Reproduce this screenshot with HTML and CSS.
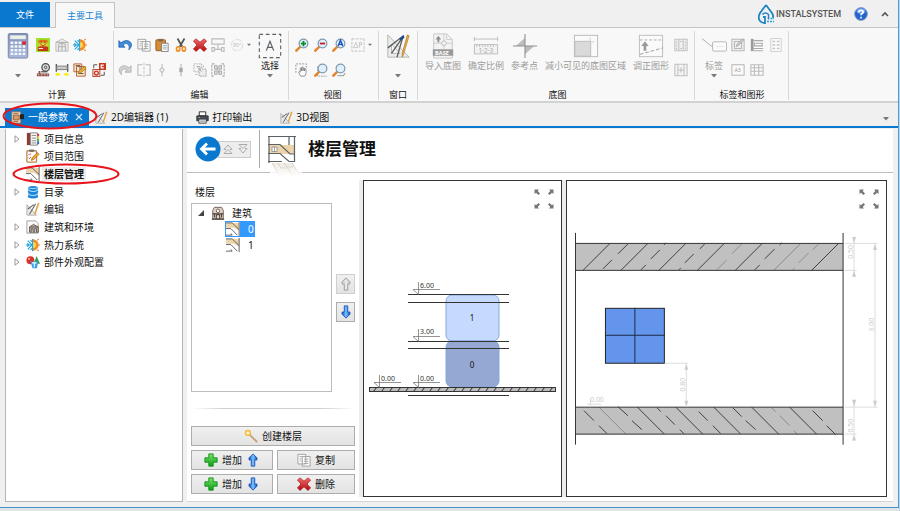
FILE: index.html
```html
<!DOCTYPE html>
<html lang="zh-CN">
<head>
<meta charset="utf-8">
<meta name="viewport" content="width=device-width, initial-scale=1">
<title>楼层管理</title>
<link rel="stylesheet" href="styles.css">
</head>
<body>
<svg class="sprite" aria-hidden="true">
  <defs>
    <linearGradient id="g-blue" x1="0" x2="1"><stop offset="0" stop-color="#0b4fc0"/><stop offset=".5" stop-color="#7cc4ff"/><stop offset="1" stop-color="#0b4fc0"/></linearGradient>
    <linearGradient id="g-green" x1="0" y1="0" x2="0" y2="1"><stop offset="0" stop-color="#7be36a"/><stop offset="1" stop-color="#0b9f12"/></linearGradient>
    <linearGradient id="g-red" x1="0" y1="0" x2="0" y2="1"><stop offset="0" stop-color="#f56a6a"/><stop offset="1" stop-color="#b30d12"/></linearGradient>
    <linearGradient id="g-calc" x1="0" y1="0" x2="0" y2="1"><stop offset="0" stop-color="#7f90bb"/><stop offset="1" stop-color="#a9b8dc"/></linearGradient>
    <linearGradient id="g-fade" x1="0" y1="0" x2="0" y2="1"><stop offset="0" stop-color="#fff" stop-opacity=".45"/><stop offset="1" stop-color="#fff"/></linearGradient>
  </defs>
  <symbol id="i-calc" viewBox="0 0 24 28">
    <rect x="1.500" y=".5" width="21" height="26.500" rx="1.500" fill="url(#g-calc)" stroke="#7683a6"/>
    <rect x="3.500" y="2.500" width="17" height="4" fill="#eef3ea" stroke="#c4ccd8" stroke-width=".5"/>
    <path d="M4 10.500h16M4 14.500h16M4 18.500h16M4 22.500h16" stroke="#f4f6fb" stroke-width="2.600" stroke-dasharray="3 1.300"/>
    <rect x="16.500" y="9" width="4" height="3.500" fill="#d8232a"/>
  </symbol>
  <symbol id="i-house" viewBox="0 0 16 16">
    <rect width="16" height="16" fill="#9be62b"/><path d="M2 4 4 2h8l2 2v1H2z" fill="#e3741b"/><path d="M3 6h10v4H3z" fill="#ead04a"/><path d="M4 6l4 3 4-3M4 9.500h8M6 3v3m4-3v3" fill="none" stroke="#c14a1d"/><path d="M2 10h12v5H2z" fill="#c53a16"/><path d="M3 12h5" stroke="#fff"/>
  </symbol>
  <symbol id="i-building-gray" viewBox="0 0 16 16">
    <path d="M1 5 8 1l7 4v10H1z" fill="#ececec" stroke="#b9b9b9"/><path d="M4 15V9q0-3 4-3t4 3v6M8 6v9M4 10h8M1 5h14" fill="none" stroke="#b5b5b5" stroke-width="1.300"/>
  </symbol>
  <symbol id="i-sun" viewBox="0 0 16 16">
    <path d="M8 1.500a6.500 6.500 0 0 1 0 13z" fill="#f68b1e"/><path d="M8 4.500a3.500 3.500 0 0 1 0 7z" fill="#ffd45a"/><path d="M13 2.500l1.500-1M14.500 8H16M13 13.500l1.500 1" stroke="#ef6a1b" stroke-width="1.300"/><path d="M0 8h7.500M7.500 1v14M2 3l5 5-5 5M1.500 6l2 2-2 2M5 2.500l2.500 2M5 13.500l2.500-2" fill="none" stroke="#29a5dc" stroke-width="1.300"/>
  </symbol>
  <symbol id="i-gauge" viewBox="0 0 16 16">
    <circle cx="11" cy="5" r="4.300" fill="#ddd" stroke="#4b4b4b" stroke-width="1.400"/><circle cx="11" cy="5" r="1.500" fill="none" stroke="#444"/><path d="M3 9h2v3H3zM1 12h14v3H1z" fill="#8e4a43"/><path d="M2 13.500h12" stroke="#ddd" stroke-dasharray="2 1.500"/><path d="M6 10h7" stroke="#555" stroke-width="1.500"/>
  </symbol>
  <symbol id="i-pipe" viewBox="0 0 16 16">
    <path d="M1.500 1v9M14.500 1v9" stroke="#555" stroke-width="1.500"/><path d="M2 3.500h12v4H2z" fill="#ccc" stroke="#777"/><path d="M0 13l3-2.500V12h3v2H3v1.500zM16 13l-3-2.500V12h-3v2h3v1.500z" fill="#f5ee00"/>
  </symbol>
  <symbol id="i-sheets" viewBox="0 0 16 16">
    <path d="M1 1h9v9H1zM4 4h10v11H4z" fill="#f7e7c9" stroke="#b5532e"/><path d="M3 3h5v4M6 12h6M7 8h5" fill="none" stroke="#5b4a44"/><path d="M6 12l1-3 6-5 2 2-6 5z" fill="#f0b42e" stroke="#7a5a20" stroke-width=".6"/>
  </symbol>
  <symbol id="i-cg" viewBox="0 0 16 16">
    <rect x="8" y="0" width="8" height="8" fill="#c5391d"/><path d="M13.500 2.500h-3v3h3" fill="none" stroke="#fff" stroke-width="1.300"/><rect x="1" y="7.500" width="8" height="8" fill="#f4ece9" stroke="#b23a22"/><circle cx="5" cy="11.500" r="2.200" fill="none" stroke="#c5391d" stroke-width="1.500"/><path d="M2 6V2h4M14 10v4h-4" fill="none" stroke="#444"/>
  </symbol>
  <symbol id="i-undo" viewBox="0 0 16 16">
    <path d="M1 3v7.500h7L5.500 8Q9 4.500 12 7.500q1.500 2 .5 6Q17 9 14.500 5 10 .5 3.500 5.500z" fill="#3c8ee0" stroke="#164f9e" stroke-width=".8"/>
  </symbol>
  <symbol id="i-redo" viewBox="0 0 16 16">
    <path d="M15 3v7.500H8L10.500 8Q7 5.500 4.500 8q-1.500 2-.5 5.500Q-.5 9 2.500 5 7 1 12.500 5.500z" fill="#d2d2d2" stroke="#a5a5a5" stroke-width=".8"/>
  </symbol>
  <symbol id="i-copy" viewBox="0 0 16 16">
    <path d="M1 1.500h9v11H1zM6 4h9v11H6z" fill="#fafafa" stroke="#9a9a9a"/><path d="M8 7h5M8 9.500h5M8 12h5M3 4h3M3 6.500h2M3 9h2" stroke="#a6a6a6"/>
  </symbol>
  <symbol id="i-paste" viewBox="0 0 16 16">
    <rect x="1" y="2" width="11" height="12.500" rx="1" fill="#d88a35" stroke="#8e571e"/><rect x="4" y="1" width="5" height="3" fill="#7b6a55"/><path d="M7.500 6h7.500v9.500H7.500z" fill="#fff" stroke="#777"/><path d="M9 8.500h4.500M9 10.500h4.500M9 12.500h4.500" stroke="#8aa"/>
  </symbol>
  <symbol id="i-cut" viewBox="0 0 16 16">
    <path d="M4 .5 9.500 10M12 .5 6.500 10" stroke="#555" stroke-width="2"/><ellipse cx="4.700" cy="12.500" rx="1.900" ry="2.500" fill="none" stroke="#f08a1c" stroke-width="1.800"/><ellipse cx="11.300" cy="12.500" rx="1.900" ry="2.500" fill="none" stroke="#f08a1c" stroke-width="1.800"/>
  </symbol>
  <symbol id="i-delete" viewBox="0 0 16 16">
    <path d="M3.500 1 8 4.800 12.500 1 15.500 3.500 11.500 8l4 4.500-3 2.800L8 11.200l-4.500 4.100-3-2.800L4.500 8 .5 3.500z" fill="url(#g-red)" stroke="#a3161a" stroke-width=".8" stroke-linejoin="round"/>
  </symbol>
  <symbol id="i-align" viewBox="0 0 16 16">
    <path d="M1 1h14v6H1zM1 11h3v4H1zM4 13h8M12 11h3v4h-3zM8 7v6" fill="none" stroke="#bbb" stroke-width="1.300"/>
  </symbol>
  <symbol id="i-mirror" viewBox="0 0 16 16">
    <path d="M6 2H1v12h5M10 2h5v12h-5" fill="none" stroke="#b8b8b8" stroke-width="1.200"/><path d="M8 0v16" stroke="#b8b8b8" stroke-dasharray="3 1.500"/>
  </symbol>
  <symbol id="i-node" viewBox="0 0 16 16"><path d="M8 1v4M8 11v4M8 5l2.500 3L8 11 5.500 8z" fill="none" stroke="#b9b9b9" stroke-width="1.200"/></symbol>
  <symbol id="i-node2" viewBox="0 0 16 16"><path d="M8 1v14" stroke="#b0b0b0" stroke-width="1.200"/><path d="M6 5.500h4v5H6z" fill="#aaa"/></symbol>
  <symbol id="i-group" viewBox="0 0 16 16">
    <path d="M1 1h9v9H1z" fill="none" stroke="#aaa" stroke-dasharray="2 1"/><path d="M7 7h8v8H7z" fill="#eee" stroke="#999" stroke-dasharray="2 1"/><path d="M3 13h2M12 3v2M5 5l5 5M4 4h4v3" fill="none" stroke="#a5a5a5"/>
  </symbol>
  <symbol id="i-ungroup" viewBox="0 0 16 16">
    <path d="M4 1H1v14h3M12 1h3v14h-3" fill="none" stroke="#aaa" stroke-width="1.200" stroke-dasharray="3 1"/><path d="M4 3h3v4H4zM9 3h3v4H9zM4 9h3v4H4zM9 9h3v4H9zM7 5l2 6" fill="#ddd" stroke="#a5a5a5"/>
  </symbol>
  <symbol id="i-select" viewBox="0 0 26 28">
    <rect x="1.500" y="1.500" width="23" height="25" fill="none" stroke="#5a6064" stroke-width="1.200" stroke-dasharray="4 3"/><path d="M9 19 13 9l4 10M10.500 15.500h5" fill="none" stroke="#5a6064" stroke-width="1.300"/>
  </symbol>
  <symbol id="lens" viewBox="0 0 16 16">
    <path d="M1.500 14.500 6 10" stroke="#e58127" stroke-width="2.800" stroke-linecap="round"/><circle cx="9.700" cy="6.300" r="5" fill="#dff0fc" stroke="#7e9ab0" stroke-width="1.400"/>
  </symbol>
  <symbol id="i-zoomin" viewBox="0 0 16 16"><use href="#lens"/><path d="M9.700 3.300v6M6.700 6.300h6" stroke="#0c8a1c" stroke-width="2"/></symbol>
  <symbol id="i-zoomout" viewBox="0 0 16 16"><use href="#lens"/><path d="M6.700 6.300h6" stroke="#c81922" stroke-width="2"/></symbol>
  <symbol id="i-zoomall" viewBox="0 0 16 16"><use href="#lens"/><path d="M7 9.500 9.700 2.500l2.700 7M8 7.300h3.500" fill="none" stroke="#1d4fc4" stroke-width="1.600"/></symbol>
  <symbol id="i-zoomsel" viewBox="0 0 16 16"><path d="M4 4v11h11" fill="none" stroke="#999" stroke-dasharray="2 1"/><use href="#lens"/></symbol>
  <symbol id="i-zoompage" viewBox="0 0 16 16"><path d="M6 14.500h7l2-3" fill="none" stroke="#aaa" stroke-width="1.500"/><use href="#lens"/></symbol>
  <symbol id="i-ap" viewBox="0 0 16 16"><path d="M1 1h14v14H1z" fill="none" stroke="#b9b9b9" stroke-dasharray="3 1.500"/><path d="M3 11l2.500-6L8 11zM9.500 11V5H12v3H9.500" fill="none" stroke="#c4c4c4"/></symbol>
  <symbol id="i-pan" viewBox="0 0 16 16"><path d="M1 11V1h12v4" fill="none" stroke="#888" stroke-dasharray="2 1.500"/><path d="M6.500 15 4 10.500q.5-1.500 2 0V6q1-1 1.500 0v3V5q1-1 1.700 0v4-3q1-1 1.700 0v3-2q1-1 1.700 0v5l-1.500 3z" fill="#fff" stroke="#777" stroke-width=".9"/></symbol>
  <symbol id="i-draft" viewBox="0 0 26 28">
    <path d="M2 2v24h23zM6 12v10h9z" fill="#ececea" fill-rule="evenodd" stroke="#b3b3b1"/><path d="M2 16 15 6M6 22l11-16M12 26 18 5" fill="none" stroke="#5c6266" stroke-width="1.500"/><path d="m14 6 5-4 1 3-4 3z" fill="#244b83"/><path d="m25 3-6 20-1.500 3 0-4L23 2z" fill="#f0a93a" stroke="#9d6d1d" stroke-width=".6"/>
  </symbol>
  <symbol id="i-ref" viewBox="0 0 28 28">
    <path d="M14 5v9H4zM14 23v-9h10z" fill="#bdbdbd"/><path d="M14 1v26M1 14h26" stroke="#929292" stroke-width="1.200"/>
  </symbol>
  <symbol id="i-area" viewBox="0 0 28 28">
    <rect x="1.500" y="2.500" width="25" height="23" fill="#fafafa" stroke="#b9b9b9"/><path d="M2 9h17v16H2z" fill="#dadada" stroke="#bbb"/><path d="M18.500 5v4M19 9.500h4" stroke="#ccc"/>
  </symbol>
  <symbol id="i-straighten" viewBox="0 0 28 28">
    <rect x="1.500" y="2.500" width="25" height="23" fill="#fafafa" stroke="#bcbcbc"/><path d="M2 7.500h24" stroke="#aaa" stroke-dasharray="3 2"/><path d="M2 23 27 16" stroke="#999" stroke-dasharray="4 2"/><path d="m7.500 9-4 5H6v5h3v-5h2.500z" fill="#9a9a9a"/>
  </symbol>
  <symbol id="i-split" viewBox="0 0 16 16"><path d="M1 1.500h14v13H1zM5.500 1v14M10.500 1v14" fill="#f0f0f0" stroke="#c2c2c2" stroke-width="1.200"/><path d="M3 4v9M13 4v9M7 4h2M7 12h2" stroke="#bbb" stroke-dasharray="2 1.500"/></symbol>
  <symbol id="i-join" viewBox="0 0 16 16"><path d="M1 1.500h14v13H1zM4.500 1v14M11.500 1v14" fill="#f4f4f4" stroke="#c0c0c0" stroke-width="1.200"/><path d="M5 8h6M8 5v6" stroke="#b3b3b3"/></symbol>
  <symbol id="i-tag" viewBox="0 0 28 28"><path d="M1 6 11 14h3" fill="none" stroke="#aaa"/><rect x="12.500" y="9.500" width="15" height="10" rx="1" fill="#fbfbfb" stroke="#b3b3b3"/><path d="M17 14.500h7" stroke="#bbb" stroke-dasharray="1 2"/></symbol>
  <symbol id="i-edit" viewBox="0 0 16 16"><path d="M1 1.500h14v13H1zM4 4h8v8H4z" fill="#eee" stroke="#b8b8b8" stroke-width="1.200"/><path d="m6 10 1-3 6-6 1.500 1.500-6 6z" fill="#ccc" stroke="#999" stroke-width=".7"/></symbol>
  <symbol id="i-legend" viewBox="0 0 16 16"><path d="M1 1h3v14H1z" fill="#999"/><path d="M4 3h11M4 12h11M4 14.500h11M5 6h9v3H5z" fill="none" stroke="#aaa" stroke-width="1.200"/></symbol>
  <symbol id="i-list" viewBox="0 0 16 16"><path d="M2 .5h12v15H2z" fill="#fafafa" stroke="#cacaca"/><path d="M4 4h3M9 4h3M4 8h3M9 8h3M4 12h3M9 12h3" stroke="#c5c5c5" stroke-width="1.500"/></symbol>
  <symbol id="i-table" viewBox="0 0 16 16"><path d="M1 2h14v12H1zM1 5.500h14M1 9.500h14M5 2v12M10 2v12" fill="#fafafa" stroke="#bbb" stroke-width="1.200"/></symbol>
  <symbol id="i-general" viewBox="0 0 16 16"><path d="M1 1h11v14H1z" fill="#f3d9bd" stroke="#a06b4a"/><path d="M3 5h7v6H3zM3 3h6M3 13h6" fill="#d99a6b" stroke="#8a5a3a"/><path d="M11 4h5v6h-5z" fill="#222"/></symbol>
  <symbol id="i-printer" viewBox="0 0 16 16"><path d="M4 1h8v5H4z" fill="#fff" stroke="#333" stroke-width="1.200"/><path d="M1 6h14v6H1z" fill="#4b4f57" stroke="#222"/><path d="M3.500 10h9v5h-9z" fill="#e8eef5" stroke="#333"/><path d="M3 8h2" stroke="#9fd45d"/><path d="M5 12.500h6" stroke="#777"/></symbol>
  <symbol id="i-book" viewBox="0 0 16 16"><path d="M1 1h4v14H1z" fill="#8c3d32"/><path d="M5 1h8v14H5z" fill="#f6f6f6" stroke="#777"/><path d="M6.500 4h5M6.500 7h5M6.500 10h5M6.500 12.500h5" stroke="#888"/><path d="M14 2v3" stroke="#d33" stroke-width="2"/><path d="M14 5v3" stroke="#ec3" stroke-width="2"/><path d="M14 8v3" stroke="#3b5" stroke-width="2"/><path d="M14 11v3" stroke="#36c" stroke-width="2"/></symbol>
  <symbol id="i-scope" viewBox="0 0 16 16"><rect x="1" y="2" width="11" height="13" rx="1" fill="#fff" stroke="#b98b4b" stroke-width="1.500"/><path d="M4 .500h5v3H4z" fill="#777"/><path d="M3 6l1 1 1.500-2M3 10l1 1 1.500-2" fill="none" stroke="#c33"/><path d="m6 13 1-3 6-6 2 2-6 6z" fill="#f3a530" stroke="#8d5a16" stroke-width=".7"/></symbol>
  <symbol id="i-floor" viewBox="0 0 16 16"><path d="M0 0h16v16H0z" fill="#fff"/><path d="M0 1h15v9h-1L9 6.500H0z" fill="#ecd3a9"/><path d="M0 1h7l8 7.500M0 7.500h5.500l7.500 7.500M15 0v16M0 15h7l-1.500-2" fill="none" stroke="#5c6166" stroke-width="1.100"/></symbol>
  <symbol id="i-db" viewBox="0 0 16 16"><path d="M2 2.500q6-3 12 0l-1 2.500 1 2.500-1 2.500 1 4q-6 3-12 0l1-4-1-2.500L3 5z" fill="#1d86d8"/><path d="M2.500 3q5.500 2 11 0M3 6q5 3 10 0M3 10.500q5 3 10 0" fill="none" stroke="#aee0ff" stroke-width="1.200"/></symbol>
  <symbol id="i-pens" viewBox="0 0 16 16"><path d="M1 3v12h11z" fill="#e8e8e6" stroke="#aaa"/><path d="M2 8l7-5M4 14 11 2" stroke="#5d646a" stroke-width="1.200"/><path d="M14.500 1 10 14" stroke="#dfa348" stroke-width="1.800"/></symbol>
  <symbol id="i-env" viewBox="0 0 16 16"><path d="M1 1h10l3 3v11H1z" fill="#fafafa" stroke="#999"/><path d="M4 14V8l4.500-3L14 8v6z" fill="#b9a99d" stroke="#5d5550"/><path d="M6 14v-4h2v4M10 14v-4h2v4M4 8h10" fill="#eee" stroke="#5d5550"/></symbol>
  <symbol id="i-parts" viewBox="0 0 16 16"><circle cx="5" cy="6" r="4.500" fill="#d9302c"/><path d="m12 1 4 9H9z" fill="#27a148"/><path d="M5 7.500h9L12.500 15h-5z" fill="#3da0ea"/><path d="M7 9h5M9.500 9v5" stroke="#fff" stroke-width="1.200"/><circle cx="3.500" cy="4.500" r="1.300" fill="#ff9c92"/></symbol>
  <symbol id="i-building" viewBox="0 0 16 16"><path d="M2 15V5l2-3.500h8L14 5v10z" fill="#e5d2c8" stroke="#65544c"/><circle cx="8" cy="5.500" r="2" fill="#fff" stroke="#65544c"/><path d="M6 15v-4q2-2.500 4 0v4M4 8v5M12 8v5M2 9h12M1 15h14" fill="none" stroke="#4c4542" stroke-width="1.200"/></symbol>
  <symbol id="i-up" viewBox="0 0 14 16"><path d="M7 1 11.500 5.500V8H9v7H5V8H2.500V5.500z" fill="url(#g-blue)" stroke="#1552b5" stroke-linejoin="round"/></symbol>
  <symbol id="i-up-off" viewBox="0 0 14 16"><path d="M7 1 11.500 5.500V8H9v7H5V8H2.500V5.500z" fill="#d6d6d6" stroke="#999" stroke-linejoin="round"/><path d="M7 3v11" stroke="#f4f4f4" stroke-width="1.500"/></symbol>
  <symbol id="i-down" viewBox="0 0 14 16"><path d="M7 15l4.500-4.500V8H9V1H5v7H2.500v2.500z" fill="url(#g-blue)" stroke="#1552b5" stroke-linejoin="round"/></symbol>
  <symbol id="i-plus" viewBox="0 0 16 16"><path d="M5.500 1h5v4.500H15v5h-4.500V15h-5v-4.500H1v-5h4.500z" fill="url(#g-green)" stroke="#0b8d16" stroke-linejoin="round"/></symbol>
  <symbol id="i-wand" viewBox="0 0 16 16"><path d="m6 6 8.500 8.500" stroke="#c79d70" stroke-width="2" stroke-linecap="round"/><circle cx="4.500" cy="4.500" r="2.800" fill="#fff4c4" stroke="#f4b63c" stroke-width="1.500"/></symbol>
  <symbol id="i-caret" viewBox="0 0 6 4"><path d="M0 0h6L3 3.500z" fill="#777"/></symbol>
  <symbol id="i-closed" viewBox="0 0 6 8"><path d="M1 .800 5 4 1 7.200z" fill="#fff" stroke="#999"/></symbol>
  <symbol id="i-open" viewBox="0 0 6 6"><path d="M6 0v6H0z" fill="#444"/></symbol>
  <symbol id="i-expand" viewBox="0 0 20 20"><path d="M.5.5h4.500L3.700 2 6 4.500 4.500 6 2 3.700.5 5zM19.500.5v4.500L18 3.700 15.500 6 14 4.500 16.300 2 15 .5zM.5 19.500V15L2 16.300 4.500 14 6 15.500 3.700 18 5 19.500zM19.500 19.500H15l1.300-1.500L14 15.500l1.500-1.500 2.500 2.300 1.500-1.300z" fill="#777"/></symbol>
  <symbol id="i-floorplan" viewBox="0 0 28 28"><path d="M1 1h26v26H1z" fill="#fff"/><path d="M1 10h26v9H1z" fill="#ecd3a9"/><path d="M0 1.500h28M26.500 1v26M21 1v9M0 9.500h12L22 19h4.500M0 18.500h12l9 8h6M0 26.500h14M1 1v27" fill="none" stroke="#5a6167" stroke-width="1.200"/><path d="M4 12h5v4.500H4zM6.500 12v4" fill="#fff" stroke="#888" stroke-width=".8"/></symbol>
</svg>

<div class="window">
  <header class="titlebar">
    <nav class="menu">
      <button class="menu-file" type="button">文件</button>
      <button class="menu-tab" type="button">主要工具</button>
    </nav>
    <div class="brand">
      <svg class="brand-mark" viewBox="0 0 16 20" aria-hidden="true"><path d="M8 1 2 9q-2.500 5 0 8 1.500 2 5 2v-6H5M8 1l6 8q1.500 2.500 1 5" fill="none" stroke="#1f86c4" stroke-width="1.800"/><path d="M4.500 10.500q3-3 6 0v5" fill="none" stroke="#1f86c4" stroke-width="1.500"/><path d="M9 17.500h7M12.500 14.500H16" stroke="#2aa2dd" stroke-width="1.500" stroke-dasharray="2 1"/></svg>
      <span class="brand-name">INSTALSYSTEM</span>
      <button class="plain" type="button" aria-label="帮助"><svg class="help" viewBox="0 0 16 16"><circle cx="8" cy="8" r="7.300" fill="#2464cf" stroke="#8a9bb8"/><ellipse cx="8" cy="4.500" rx="5" ry="3" fill="#6fa4f2"/><path d="M5.500 6.200Q5.500 3.800 8 3.800t2.500 2.200Q10.500 7.200 8 8.300V9.500M8 11v2" fill="none" stroke="#fff" stroke-width="1.900"/></svg></button>
      <button class="plain" type="button" aria-label="折叠"><svg class="collapse" viewBox="0 0 8 6"><path d="M1 5 4 2l3 3" fill="none" stroke="#555" stroke-width="1.600"/></svg></button>
    </div>
  </header>

  <div class="ribbon">
    <section class="group group-calc">
      <div class="group-body">
        <button class="big" type="button" aria-label="计算"><svg class="icon-big"><use href="#i-calc"/></svg><svg class="caret"><use href="#i-caret"/></svg></button>
        <div class="icons icons-4">
          <button type="button" aria-label="热损失"><svg><use href="#i-house"/></svg></button>
          <button type="button" aria-label="建筑"><svg><use href="#i-building-gray"/></svg></button>
          <button type="button" aria-label="冷热"><svg><use href="#i-sun"/></svg></button>
          <span></span>
          <button type="button" aria-label="设备"><svg><use href="#i-gauge"/></svg></button>
          <button type="button" aria-label="管道"><svg><use href="#i-pipe"/></svg></button>
          <button type="button" aria-label="图纸"><svg><use href="#i-sheets"/></svg></button>
          <button type="button" aria-label="转换"><svg><use href="#i-cg"/></svg></button>
        </div>
      </div>
      <h2>计算</h2>
    </section>
    <section class="group group-edit">
      <div class="group-body">
        <div class="icons icons-7">
          <button type="button" aria-label="撤销"><svg><use href="#i-undo"/></svg></button>
          <button type="button" aria-label="复制"><svg><use href="#i-copy"/></svg></button>
          <button type="button" aria-label="粘贴"><svg><use href="#i-paste"/></svg></button>
          <button type="button" aria-label="剪切"><svg><use href="#i-cut"/></svg></button>
          <button type="button" aria-label="删除"><svg><use href="#i-delete"/></svg></button>
          <button type="button" aria-label="对齐"><svg><use href="#i-align"/></svg></button>
          <button type="button" aria-label="旋转"><svg viewBox="0 0 16 16"><circle cx="8" cy="8" r="6.500" fill="none" stroke="#d8d8d8" stroke-dasharray="8 1.500"/><text x="3.500" y="10.500" font-size="6" fill="#bdbdbd">90°</text></svg></button>
          <button type="button" aria-label="重做"><svg><use href="#i-redo"/></svg></button>
          <button type="button" aria-label="镜像"><svg><use href="#i-mirror"/></svg></button>
          <button type="button" aria-label="节点"><svg><use href="#i-node"/></svg></button>
          <button type="button" aria-label="断点"><svg><use href="#i-node2"/></svg></button>
          <button type="button" aria-label="组合"><svg><use href="#i-group"/></svg></button>
          <button type="button" aria-label="拆分"><svg><use href="#i-ungroup"/></svg></button>
        </div>
        <button class="more" type="button" aria-label="更多"><svg class="caret"><use href="#i-caret"/></svg></button>
        <button class="big big-select" type="button"><svg class="icon-big"><use href="#i-select"/></svg><span>选择</span><svg class="caret"><use href="#i-caret"/></svg></button>
      </div>
      <h2>编辑</h2>
    </section>
    <section class="group group-view">
      <div class="group-body">
        <div class="icons icons-4">
          <button type="button" aria-label="放大"><svg><use href="#i-zoomin"/></svg></button>
          <button type="button" aria-label="缩小"><svg><use href="#i-zoomout"/></svg></button>
          <button type="button" aria-label="全部"><svg><use href="#i-zoomall"/></svg></button>
          <button type="button" aria-label="范围"><svg><use href="#i-ap"/></svg></button>
          <button type="button" aria-label="平移"><svg><use href="#i-pan"/></svg></button>
          <button type="button" aria-label="缩放选择"><svg><use href="#i-zoomsel"/></svg></button>
          <button type="button" aria-label="缩放页面"><svg><use href="#i-zoompage"/></svg></button>
        </div>
        <button class="more" type="button" aria-label="更多"><svg class="caret"><use href="#i-caret"/></svg></button>
      </div>
      <h2>视图</h2>
    </section>
    <section class="group group-window">
      <div class="group-body">
        <button class="big" type="button" aria-label="窗口"><svg class="icon-big"><use href="#i-draft"/></svg><svg class="caret"><use href="#i-caret"/></svg></button>
      </div>
      <h2>窗口</h2>
    </section>
    <section class="group group-base">
      <div class="group-body">
        <div class="tools">
          <button class="big off" type="button"><svg class="icon-big" viewBox="0 0 24 28"><path d="M2 1h14l6 6v20H2z" fill="#f3f3f3" stroke="#c5c5c5"/><path d="M16 1v6h6M13 1v16M2 11h20" fill="none" stroke="#ccc"/><circle cx="13" cy="11" r="2.500" fill="#f3f3f3" stroke="#bbb"/><path d="M7 3 4 7h2v3h2V7h2z" fill="#8d8d8d"/><path d="M1 17.500h22v7H1z" fill="#9a9a9a"/><text x="3.500" y="23.500" font-size="6" font-weight="700" fill="#fff">BASE</text></svg><span>导入底图</span></button>
          <button class="big off" type="button"><svg class="icon-big" viewBox="0 0 28 28"><path d="M1 6.500h26M1.500 4v5M26.500 4v5" stroke="#bcbcbc"/><rect x="1.500" y="12.500" width="25" height="10" fill="#f2f2f2" stroke="#bcbcbc"/><path d="M4 13v2M7 13v2M10 13v2M13 13v2M16 13v2M19 13v2M22 13v2" stroke="#bbb"/><text x="6" y="21" font-size="7" fill="#aaa">1·2·3</text></svg><span>确定比例</span></button>
          <button class="big off" type="button"><svg class="icon-big"><use href="#i-ref"/></svg><span>参考点</span></button>
          <button class="big off" type="button"><svg class="icon-big"><use href="#i-area"/></svg><span>减小可见的底图区域</span></button>
          <button class="big off" type="button"><svg class="icon-big"><use href="#i-straighten"/></svg><span>调正图形</span></button>
        </div>
        <div class="icons icons-1">
          <button type="button" aria-label="拆开"><svg><use href="#i-split"/></svg></button>
          <button type="button" aria-label="合并"><svg><use href="#i-join"/></svg></button>
        </div>
      </div>
      <h2>底图</h2>
    </section>
    <section class="group group-label">
      <div class="group-body">
        <button class="big big-tag off" type="button"><svg class="icon-big"><use href="#i-tag"/></svg><span>标签</span><svg class="caret"><use href="#i-caret"/></svg></button>
        <div class="icons icons-3">
          <button type="button" aria-label="修改"><svg><use href="#i-edit"/></svg></button>
          <button type="button" aria-label="图例"><svg><use href="#i-legend"/></svg></button>
          <button type="button" aria-label="列表"><svg><use href="#i-list"/></svg></button>
          <button type="button" aria-label="图框"><svg viewBox="0 0 16 16"><rect x="1" y="2" width="14" height="12" fill="#fafafa" stroke="#b8b8b8" stroke-width="1.200"/><text x="4" y="10.500" font-size="6" fill="#999">A3</text></svg></button>
          <button type="button" aria-label="表格"><svg><use href="#i-table"/></svg></button>
        </div>
      </div>
      <h2>标签和图形</h2>
    </section>
  </div>

  <nav class="doc-tabs">
    <a class="doc-tab active" href="#general"><svg><use href="#i-general"/></svg>一般参数<svg class="close" viewBox="0 0 8 8"><path d="m1 1 6 6M7 1 1 7" stroke="#cfe6f8" stroke-width="1.200"/></svg>
      <svg class="ring ring-tab" viewBox="0 0 96 28" preserveAspectRatio="none" aria-hidden="true"><ellipse cx="48" cy="14" rx="46.500" ry="12.500" fill="none" stroke="#e8131b" stroke-width="2"/></svg></a>
    <a class="doc-tab" href="#editor"><svg><use href="#i-pens"/></svg>2D编辑器 (1)</a>
    <a class="doc-tab" href="#print"><svg><use href="#i-printer"/></svg>打印输出</a>
    <a class="doc-tab" href="#view3d"><svg><use href="#i-pens"/></svg>3D视图</a>
    <button class="plain tabs-menu" type="button" aria-label="标签页列表"><svg class="caret"><use href="#i-caret"/></svg></button>
  </nav>

  <div class="workspace">
    <aside class="sidebar">
      <ul class="nav-tree">
        <li><svg class="twist"><use href="#i-closed"/></svg><svg class="ico"><use href="#i-book"/></svg><a href="#info">项目信息</a></li>
        <li><span class="twist"></span><svg class="ico"><use href="#i-scope"/></svg><a href="#scope">项目范围</a></li>
        <li class="current"><span class="twist"></span><svg class="ico"><use href="#i-floor"/></svg><a href="#floors">楼层管理</a>
          <svg class="ring ring-nav" viewBox="0 0 108 22" preserveAspectRatio="none" aria-hidden="true"><ellipse cx="54" cy="11" rx="52.500" ry="9.500" fill="none" stroke="#e8131b" stroke-width="2"/></svg></li>
        <li><svg class="twist"><use href="#i-closed"/></svg><svg class="ico"><use href="#i-db"/></svg><a href="#catalog">目录</a></li>
        <li><span class="twist"></span><svg class="ico"><use href="#i-pens"/></svg><a href="#edit">编辑</a></li>
        <li><svg class="twist"><use href="#i-closed"/></svg><svg class="ico"><use href="#i-env"/></svg><a href="#env">建筑和环境</a></li>
        <li><svg class="twist"><use href="#i-closed"/></svg><svg class="ico"><use href="#i-sun"/></svg><a href="#heat">热力系统</a></li>
        <li><svg class="twist"><use href="#i-closed"/></svg><svg class="ico"><use href="#i-parts"/></svg><a href="#parts">部件外观配置</a></li>
      </ul>
    </aside>

    <main class="page">
      <header class="page-head">
        <button class="plain back" type="button" aria-label="返回"><svg viewBox="0 0 26 26"><circle cx="13" cy="13" r="12.500" fill="#0b78d0"/><path d="M20.500 13H7M12 7.500 6.500 13l5.500 5.500" fill="none" stroke="#fff" stroke-width="2.800"/></svg></button>
        <div class="stepper">
          <button class="plain" type="button" aria-label="上一个"><svg viewBox="0 0 10 10"><path d="M1 5.500 5 1l4 4.500H7M3 5.500H1M1 9.500 5 5.500l4 4z" fill="none" stroke="#aaa"/></svg></button>
          <button class="plain" type="button" aria-label="下一个"><svg viewBox="0 0 10 10"><path d="M1 4.500 5 9l4-4.500H7M3 4.500H1M1 .5 5 4.500l4-4z" fill="none" stroke="#aaa"/></svg></button>
        </div>
        <div class="page-icon">
          <svg class="plan" viewBox="0 0 28 28"><use href="#i-floorplan"/></svg>
          <svg class="plan-shadow" viewBox="0 0 32 14" aria-hidden="true"><path d="M2 0h20l9 14H10z" fill="#e6dccb"/><path d="M2 0l8 14M8 0l3 5h7l5 9M14 0l3 4h6M22 0l9 14" fill="none" stroke="#999"/><path d="M0 0h32v14H0z" fill="url(#g-fade)"/></svg>
        </div>
        <h1>楼层管理</h1>
      </header>

      <div class="page-body">
        <section class="floors">
          <h2>楼层</h2>
          <div class="floors-row">
            <ul class="floor-tree">
              <li><svg class="open"><use href="#i-open"/></svg><svg class="ico"><use href="#i-building"/></svg><span class="floor-root">建筑</span></li>
              <li class="floor"><button class="plain floor-item selected" type="button"><svg class="ico"><use href="#i-floor"/></svg><span>0</span></button></li>
              <li class="floor"><button class="plain floor-item" type="button"><svg class="ico"><use href="#i-floor"/></svg><span>1</span></button></li>
            </ul>
            <div class="movers">
              <button class="btn mover" type="button" aria-label="上移" disabled><svg><use href="#i-up-off"/></svg></button>
              <button class="btn mover" type="button" aria-label="下移"><svg><use href="#i-down"/></svg></button>
            </div>
          </div>
          <hr>
          <div class="actions">
            <button class="btn wide" type="button"><svg><use href="#i-wand"/></svg>创建楼层</button>
            <button class="btn" type="button"><svg><use href="#i-plus"/></svg>增加<svg><use href="#i-up"/></svg></button>
            <button class="btn" type="button"><svg><use href="#i-copy"/></svg>复制</button>
            <button class="btn" type="button"><svg><use href="#i-plus"/></svg>增加<svg><use href="#i-down"/></svg></button>
            <button class="btn" type="button"><svg><use href="#i-delete"/></svg>删除</button>
          </div>
        </section>

        <div class="canvases">
          <figure class="canvas canvas-stack">
            <svg class="drawing" viewBox="0 0 197 315" preserveAspectRatio="xMinYMin meet">
              <defs>
                <pattern id="ground" width="8" height="5" patternUnits="userSpaceOnUse" y="206"><path d="M0 0h8v5H0z" fill="#bdbdbd"/><path d="M1 5 5 0" stroke="#222"/></pattern>
                <g id="mark"><path d="M49 108.500h27M54.500 101v12.500" fill="none" stroke="#777" stroke-width=".8"/><path d="M49 108.500l5.500 5" fill="none" stroke="#777" stroke-width=".8"/></g>
              </defs>
              <rect x="82" y="114" width="53" height="46" rx="6" fill="#c6daff" stroke="#86a9d6"/>
              <rect x="82" y="160" width="53" height="46" rx="6" fill="#95a8d3" stroke="#86a9d6"/>
              <path d="M44 113.500h101M44 121.500h101M44 160.500h101M44 167.500h101M44 214.500h101" stroke="#333"/>
              <rect x="5.500" y="206.500" width="186" height="4" fill="url(#ground)" stroke="#333"/>
              <use href="#mark"/><use href="#mark" y="47"/><use href="#mark" y="93"/><use href="#mark" x="-39" y="93"/>
              <g class="level"><text x="56" y="107">6.00</text><text x="56" y="153">3.00</text><text x="56" y="200">0.00</text><text x="17" y="200">0.00</text></g>
              <g class="floor-no"><text x="108" y="140">1</text><text x="108" y="187">0</text></g>
            </svg>
            <button class="plain expand" type="button" aria-label="放大视图"><svg><use href="#i-expand"/></svg></button>
          </figure>

          <figure class="canvas canvas-section">
            <svg class="drawing" viewBox="0 0 319 315" preserveAspectRatio="xMinYMin meet">
              <path d="M8.500 62.500h268v27h-268zM8.500 226.500h268v27h-268z" fill="#c0c0c0"/>
              <g stroke="#333" stroke-width=".9" fill="none">
                <path d="M16 89.500l27-27M54 89.500l27-27M92 89.500l27-27M130.500 89.500l27-27M168.500 89.500l27-27M245 89.500l27-27"/>
                <path d="M207 89.500l27-27" stroke="#888"/>
                <path d="M36 88l9-9M51 73l10-10M74 89l5-5M84 78l9-9M97 64l2-2M112 89l2-2M118 82l9-9M133 68l5-5M188 89l5-5M198 78l10-10M213 64l2-2"/>
                <path d="M150 89l10-10M165 73l10-10M226 89l2-2M232 82l10-10M246 69l6-6" stroke="#888"/>
                <path d="M70.500 226.500l27 27M109 226.500l27 27M147 226.500l27 27M185 226.500l27 27M223 226.500l27 27"/>
                <path d="M32 226.500l27 27" stroke="#888"/>
                <path d="M17 230l10 10M32 245l8 8M51 226l10 9M65 240l10 9M90 227l4 4M99 235l9 9M113 249l4 4M132 231l9 9M146 245l8 8M166 227l9 9M179 240l10 9M246 230l10 10M260 245l9 9"/>
                <path d="M205 227l4 4M213 235l10 10M227 250l4 4" stroke="#888"/>
              </g>
              <path d="M8.500 62.500h268M8.500 89.500h268M8.500 226.500h268M8.500 253.500h268M8.500 52v212M276.500 52v212" stroke="#333" fill="none"/>
              <rect x="38.500" y="127.500" width="59" height="55" fill="#6495ed" stroke="#222"/>
              <path d="M68 127v55M38 154.500h60" stroke="#1e2a44"/>
              <g stroke="#ddd" fill="none">
                <path d="M278 62.500h33M278 89.500h12M278 226.500h33M278 253.500h12M287.500 56v40M287.500 219v41M308.500 63v163M98 182.500h23M119.500 183v43M20 223.500h14M23.500 218v8"/>
              </g>
              <path d="M285.500 56h4l-2 6zM285.500 96h4l-2-6zM285.500 219h4l-2 7zM285.500 260h4l-2-6zM306.500 69h4l-2-6zM306.500 220h4l-2 6zM117.500 189h4l-2-6zM117.500 220h4l-2 6z" fill="#ccc"/>
              <g class="dim">
                <text transform="translate(286 71) rotate(-90)">0.50</text>
                <text transform="translate(286 245) rotate(-90)">0.50</text>
                <text transform="translate(307 144) rotate(-90)">3.00</text>
                <text transform="translate(118 204) rotate(-90)">0.80</text>
                <text x="30" y="221">0.00</text>
              </g>
            </svg>
            <button class="plain expand" type="button" aria-label="放大视图"><svg><use href="#i-expand"/></svg></button>
          </figure>
        </div>
      </div>
    </main>
  </div>
</div>
</body>
</html>
```
FILE: styles.css
```css
:root {
  --blue: #0b78d0;
  --line: #c4c4c4;
  --panel: #f0f0f0;
}

* {
  box-sizing: border-box;
}

body {
  margin: 0;
  height: 100vh;
  display: flex;
  flex-direction: column;
  padding: 0 1px 3px 0;
  background: linear-gradient(to right, #e2e4e6 0, #e2e4e6 calc(100% - 1px), #b9d8ee 0);
  color: #111;
  font: 10px/14px "Noto Sans", "Noto Sans CJK SC", sans-serif;
}

button {
  font: inherit;
  color: inherit;
}

h1,
h2,
ul,
figure {
  margin: 0;
  padding: 0;
}

h2 {
  font-weight: 400;
}

ul {
  list-style: none;
}

a {
  color: inherit;
  text-decoration: none;
}

svg {
  display: block;
  flex: none;
}

.sprite {
  position: absolute;
  width: 0;
  height: 0;
}

.plain {
  display: flex;
  align-items: center;
  padding: 0;
  border: 0;
  background: none;
}

.window {
  flex: 1;
  min-height: 0;
  display: flex;
  flex-direction: column;
  background: var(--panel);
  border-right: 1px solid #4f9bd0;
  border-bottom: 1px solid #3f93cc;
}

/* title bar */
.titlebar {
  display: flex;
  justify-content: space-between;
  height: 28px;
  flex: none;
  border-bottom: 1px solid var(--line);
}

.menu {
  display: flex;
  gap: 5px;
  padding-top: 2px;
  font-size: 9px;
}

.menu .menu-file {
  width: 50px;
  padding: 0;
  border: 0;
  background: var(--blue);
  color: #fff;
}

.menu .menu-tab {
  width: 60px;
  height: 26px;
  padding: 0;
  border: 1px solid var(--line);
  border-bottom: 0;
  background: #f8f8f8;
  color: #1583d2;
}

.brand {
  display: flex;
  align-items: center;
  padding-right: 9px;
}

.brand-mark {
  width: 16px;
  height: 20px;
  margin-right: 2px;
}

.brand-name {
  width: 70px;
  margin-right: 8px;
  font: 500 9px/14px Roboto, sans-serif;
  color: #555;
}

.help {
  width: 14px;
  height: 14px;
  margin-right: 13px;
}

.collapse {
  width: 8px;
  height: 6px;
}

/* ribbon */
.ribbon {
  display: flex;
  flex: none;
  height: 75px;
  padding: 3px 0 1px;
  background: #f8f8f8;
  border-bottom: 2px solid #d2d2d2;
  font-size: 9px;
}

.group {
  display: flex;
  flex-direction: column;
  justify-content: space-between;
  border-right: 1px solid #d8d8d8;
}

.group h2 {
  font-size: 9px;
  line-height: 10px;
  text-align: center;
}

.group-body {
  display: flex;
  padding-top: 1px;
}

.group-calc { padding: 0 5px 0 6px; }
.group-calc .group-body { gap: 4px; }
.group-edit { padding: 0 5px 0 2px; }
.group-view { padding: 0 6px 0 4px; }
.group-window { padding: 0 6px; }
.group-base { padding: 0 4px 0 7px; }
.group-base .group-body { gap: 3px; }
.group-label { padding: 0 3px 0 4px; }

.tools {
  display: flex;
  gap: 7px;
}

.icons {
  display: grid;
  grid-auto-rows: 25px;
}

.icons-1 { width: 18px; grid-template-columns: 1fr; }
.icons-3 { width: 56px; grid-template-columns: repeat(3, 1fr); }
.icons-4 { width: 74px; grid-template-columns: repeat(4, 1fr); }
.icons-7 { width: 130px; grid-template-columns: repeat(7, 1fr); }

.icons button,
.more {
  display: grid;
  place-items: center;
  padding: 0;
  border: 0;
  background: none;
}

.icons svg {
  width: 14px;
  height: 14px;
}

.more {
  width: 5px;
  height: 25px;
}

.caret {
  width: 6px;
  height: 4px;
}

.more .caret {
  width: 4px;
}

.big {
  display: grid;
  grid-template-rows: 26px 14px 6px;
  justify-items: center;
  align-items: center;
  align-content: start;
  padding: 1px 0 0;
  border: 0;
  background: none;
  line-height: 14px;
  white-space: nowrap;
}

.big .caret {
  grid-row: 3;
}

.icon-big {
  width: 26px;
  height: 26px;
}

.group-calc .icon-big { width: 24px; }
.big-select { margin-left: 6px; }
.big-tag { width: 30px; }
.off { color: #9b9b9b; }

/* document tabs */
.doc-tabs {
  display: flex;
  align-items: flex-end;
  flex: none;
  height: 25px;
  padding-left: 5px;
  border-bottom: 2px solid var(--blue);
}

.doc-tab {
  position: relative;
  display: flex;
  align-items: center;
  gap: 3px;
  height: 18px;
  padding: 0 6px;
  margin-right: 16px;
}

.doc-tab svg {
  width: 13px;
  height: 13px;
}

.doc-tab.active {
  gap: 4px;
  margin-right: 0;
  background: var(--blue);
  color: #fff;
}

.doc-tab .close {
  width: 8px;
  height: 8px;
  margin-left: 3px;
}

.tabs-menu {
  margin-left: auto;
  height: 14px;
  padding-right: 9px;
}

.ring {
  position: absolute;
  z-index: 2;
  pointer-events: none;
}

.doc-tab .ring-tab {
  left: -3px;
  top: -6px;
  width: 96px;
  height: 28px;
}

/* workspace */
.workspace {
  flex: 1;
  min-height: 0;
  display: flex;
  gap: 4px;
  padding: 1px 5px 5px;
}

.sidebar {
  width: 178px;
  flex: none;
  background: #fff;
  border: 1px solid #b5b5b5;
  border-top: 0;
}

.nav-tree {
  display: grid;
  grid-template-rows: repeat(8, 1fr);
  height: 143px;
  padding: 1px 0 1px 8px;
}

.nav-tree li {
  position: relative;
  display: flex;
  align-items: center;
}

.twist {
  width: 6px;
  height: 8px;
  margin-right: 6px;
}

.ico {
  width: 14px;
  height: 14px;
}

.nav-tree a {
  margin-left: 2px;
  padding: 0 2px;
}

.current a {
  background: #ececec;
  font-weight: 700;
}

.ring-nav {
  left: -2px;
  top: -2px;
  width: 108px;
  height: 22px;
}

.page {
  flex: 1;
  min-width: 0;
  display: flex;
  flex-direction: column;
  background: #fff;
  border-bottom: 1px solid #d5d5d5;
}

.page-head {
  display: flex;
  align-items: center;
  flex: none;
  height: 44px;
  padding: 0 8px 3px;
  border-bottom: 1px solid #bdbdbd;
}

.back {
  z-index: 1;
}

.back svg {
  width: 26px;
  height: 26px;
}

.stepper {
  display: flex;
  align-items: center;
  gap: 5px;
  height: 17px;
  width: 33px;
  margin-left: -3px;
  padding-left: 4px;
  border: 1px solid #ccc;
  background: #ededed;
}

.stepper svg {
  width: 10px;
  height: 10px;
}

.page-icon {
  position: relative;
  margin-left: 8px;
  padding: 5px 0 5px 8px;
  border-left: 1px solid #aaa;
}

.plan {
  width: 28px;
  height: 28px;
}

.plan-shadow {
  position: absolute;
  left: 10px;
  top: 33px;
  width: 32px;
  height: 14px;
}

h1 {
  margin-left: 12px;
  font-size: 17px;
  line-height: 24px;
}

.page-body {
  flex: 1;
  min-height: 0;
  display: flex;
  padding: 7px 6px 4px 4px;
}

.floors {
  display: flex;
  flex-direction: column;
  width: 164px;
  flex: none;
}

.floors h2 {
  padding: 5px 4px 4px;
  font-size: 10px;
}

.floors-row {
  display: flex;
  gap: 4px;
  flex: 1;
  min-height: 0;
}

.floor-tree {
  flex: 1;
  padding: 1px 0 0 6px;
  border: 1px solid #bcbcbc;
}

.floor-tree li {
  display: flex;
  align-items: center;
  height: 16px;
}

.open {
  width: 6px;
  height: 6px;
  margin-right: 7px;
}

.floor-root {
  margin-left: 7px;
}

.floor-tree .floor {
  padding-left: 27px;
}

.floor-item {
  gap: 8px;
  height: 16px;
  padding: 0 1px;
}

.floor-item.selected {
  background: #3399ff;
  color: #fff;
}

.movers {
  display: flex;
  flex-direction: column;
  justify-content: center;
  gap: 8px;
}

.btn {
  display: flex;
  align-items: center;
  justify-content: center;
  gap: 4px;
  height: 20px;
  padding: 0;
  border: 1px solid #adadad;
  background: linear-gradient(#f0f0f0, #e3e3e3);
}

.btn svg {
  width: 14px;
  height: 14px;
}

.mover {
  width: 19px;
}

.mover:disabled {
  border-color: #cfcfcf;
}

hr {
  width: 100%;
  height: 1px;
  margin: 16px 0 17px;
  border: 0;
  background: linear-gradient(to right, transparent, #d0d0d0 20%, #d0d0d0 80%, transparent);
}

.actions {
  display: grid;
  grid-template-columns: 82px 1fr;
  gap: 4px;
  padding-bottom: 3px;
}

.wide {
  grid-column: 1 / -1;
}

.canvases {
  flex: 1;
  min-width: 0;
  display: flex;
  gap: 4px;
  margin-left: 4px;
  padding-left: 4px;
  background: #ececec;
}

.canvas {
  position: relative;
  min-width: 0;
  background: #fff;
  border: 1px solid #333;
}

.canvas-stack { flex: 199; }
.canvas-section { flex: 321; }

.drawing {
  width: 100%;
  height: 100%;
}

.expand {
  position: absolute;
  top: 8px;
  right: 7px;
}

.expand svg {
  width: 20px;
  height: 20px;
}

.level text {
  font-size: 7px;
  fill: #333;
}

.floor-no text {
  font-size: 8px;
  fill: #111;
  text-anchor: middle;
}

.dim text {
  font-size: 7px;
  fill: #ccc;
  text-anchor: middle;
}
```
